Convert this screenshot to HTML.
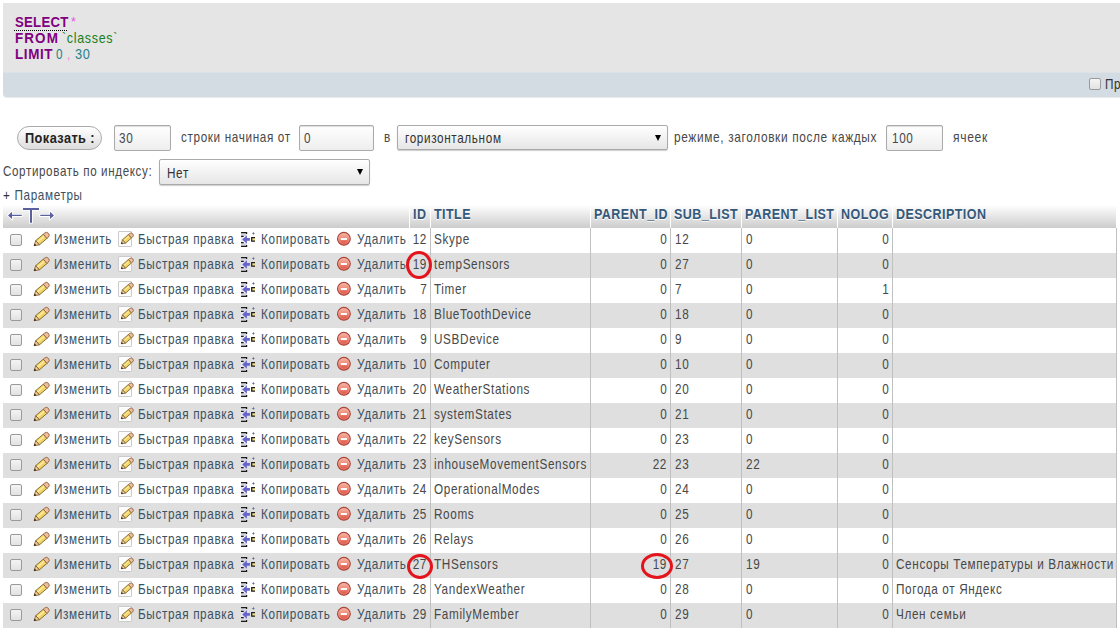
<!DOCTYPE html><html><head><meta charset="utf-8"><style>
*{margin:0;padding:0;box-sizing:border-box}
body{width:1120px;height:634px;overflow:hidden;background:#fff;font-family:"Liberation Sans",sans-serif;position:relative;color:#484848}
.a{position:absolute;white-space:pre;line-height:16px}
.t{font-size:13.9px;letter-spacing:0.75px;transform:scaleX(0.845);transform-origin:0 0}
.r{transform-origin:100% 0}
.lnk{color:#3b5262}
.kw{color:#800080;font-weight:bold;font-size:13.9px;transform-origin:0 0}
.ic{position:absolute}
.cb{position:absolute;left:10px;width:12px;height:12px;border:1px solid #9a9a9a;border-radius:2px;background:linear-gradient(#f4f4f4,#e2e2e2)}
.row{position:absolute;left:3px;width:1113px;height:25px}
.vb{position:absolute;width:1px;background:#c0c0c0}
.hb{position:absolute;width:1px;background:#fff;top:203px;height:25px}
.th{position:absolute;top:205px;font-weight:bold;color:#34587a;font-size:13.9px;line-height:16px;text-shadow:0 1px 0 #fff;letter-spacing:0.5px;transform:scaleX(0.9);transform-origin:0 0;white-space:pre}
.inp{position:absolute;border:1px solid #aaa;border-radius:2px;background:linear-gradient(#fff,#eee);box-shadow:inset 0 1px 1px #ddd}
.sel{position:absolute;border:1px solid #aaa;border-radius:2px;background:linear-gradient(#fff,#e6e6e6);box-shadow:0 1px 1px #ccc}
.circ{position:absolute;border:3px solid #e3141c;border-radius:50%}
</style></head><body>

<svg width="0" height="0" style="position:absolute"><defs>
<g id="pen1">
 <path d="M2.71,9.65 L10.32,3.17 L13.94,7.43 L6.33,13.91 Z" fill="#f2d466" stroke="#7d6024" stroke-width="0.9"/>
 <path d="M4.51,11.0 L11.36,5.17" stroke="#fff0a8" stroke-width="1.2"/>
 <path d="M10.32,3.17 L11.69,2.01 A2.8,2.8 0 0 1 15.31,6.27 L13.94,7.43 Z" fill="#eebf9c" stroke="#8a6040" stroke-width="0.9"/>
 <path d="M1.1,14.7 L2.71,9.65 L6.33,13.91 Z" fill="#f4cf9e" stroke="#7a5a2a" stroke-width="0.8"/>
 <path d="M0.9,14.9 L1.7,12.5 L3.4,14.2 Z" fill="#2a2218"/>
</g>
<linearGradient id="dg" x1="0" y1="0" x2="0" y2="1"><stop offset="0" stop-color="#f7b8a8"/><stop offset="0.45" stop-color="#f08e7c"/><stop offset="1" stop-color="#d8463a"/></linearGradient>
<g id="qe">
 <rect x="0.5" y="0.5" width="13" height="15" rx="0.5" fill="#fdfdfd" stroke="#cbcbcb"/>
 <path d="M4.43,8.77 L10.46,3.51 L13.48,6.97 L7.45,12.23 Z" fill="#f2d466" stroke="#7d6024" stroke-width="0.85"/>
 <path d="M5.99,9.79 L11.26,5.19" stroke="#fff0a8" stroke-width="1"/>
 <path d="M10.46,3.51 L11.59,2.53 A2.3,2.3 0 0 1 14.61,5.99 L13.48,6.97 Z" fill="#eebf9c" stroke="#8a6040" stroke-width="0.85"/>
 <path d="M3.3,12.8 L4.43,8.77 L7.45,12.23 Z" fill="#f4cf9e" stroke="#7a5a2a" stroke-width="0.75"/>
 <path d="M3.1,13.0 L3.7,11.1 L5.1,12.4 Z" fill="#2a2218"/>
</g>
<g id="cp">
 <rect x="1" y="2" width="5.5" height="3.2" fill="#d6d6e2"/>
 <rect x="1" y="11.9" width="5.5" height="3.2" fill="#d6d6e2"/>
 <rect x="1" y="5.2" width="2" height="6.7" fill="#e6e6ee"/>
 <path d="M1,1.6 H6.6 V3 M1,5.4 H3.7 M1,11.6 H3.7 M1,15.3 H6.6 V13.9" stroke="#1a1a1a" stroke-width="1.2" fill="none"/>
 <path d="M2.2,8.4 L6.9,4.2 V7.1 H9.9 V9.7 H6.9 V12.8 Z" fill="#6565cc"/>
 <rect x="11.6" y="6.6" width="3.4" height="3.6" fill="#eee08a"/>
 <path d="M15,6.6 H11.7 V10.2 H15" stroke="#1a1a1a" stroke-width="1.2" fill="none"/>
 <path d="M13.4,0.8 L13.9,1.9 L15,2.4 L13.9,2.9 L13.4,4 L12.9,2.9 L11.8,2.4 L12.9,1.9 Z" fill="#5a6a9a"/>
</g>
<g id="del">
 <circle cx="7.9" cy="7.8" r="6.4" fill="url(#dg)" stroke="#a8463a" stroke-width="1.1"/>
 <circle cx="7.9" cy="7.8" r="5.2" fill="none" stroke="#f6b8aa" stroke-width="0.6" opacity="0.6"/>
 <rect x="4.8" y="7.0" width="6.1" height="2" fill="#fff"/>
</g>
</defs></svg>
<div style="position:absolute;left:3px;top:3px;width:1130px;height:69px;background:#e5e5e5"></div>
<div style="position:absolute;left:3px;top:72px;width:1130px;height:25px;background:#d3dce3;border-radius:0 0 0 4px;border-top:1px solid #dde2e7;box-shadow:0 1px 0 #e8eaec"></div>
<div class="a kw" style="left:15px;top:14px;letter-spacing:0.25px;transform:scaleX(0.95)">SELECT</div>
<div style="position:absolute;left:14px;top:30px;width:53px;height:1px;border-top:1px dotted #000"></div>
<div class="a" style="left:71px;top:14px;color:#e850e8;font-size:12.5px">*</div>
<div class="a kw" style="left:15px;top:30px;letter-spacing:1.1px;transform:scaleX(0.97)">FROM</div>
<div class="a t" style="left:62px;top:30px;color:#1a801a;transform:scaleX(0.9)">`classes`</div>
<div class="a kw" style="left:15px;top:46px;letter-spacing:0.6px;transform:scaleX(0.97)">LIMIT</div>
<div class="a t" style="left:56px;top:46px;color:#2a7f88">0</div>
<div class="a" style="left:67px;top:47px;color:#f07af0;font-size:12px">,</div>
<div class="a t" style="left:75px;top:46px;color:#2a7f88;transform:scaleX(0.92)">30</div>
<div style="position:absolute;left:1089px;top:78px;width:12px;height:12px;border:1px solid #9a9a9a;border-radius:2px;background:linear-gradient(#f4f4f4,#e2e2e2)"></div>
<div class="a t" style="left:1105px;top:76px;color:#333">Пр</div>
<div style="position:absolute;left:17px;top:126px;width:85px;height:24px;border:1px solid #aaa;border-radius:12px;background:linear-gradient(#fff,#ddd)"></div>
<div class="a" style="left:25px;top:130px;font-weight:bold;font-size:13.9px;color:#222;letter-spacing:0.45px;transform:scaleX(0.92);transform-origin:0 0">Показать :</div>
<div class="inp" style="left:114px;top:125px;width:57px;height:26px"></div>
<div class="a t" style="left:119px;top:130px">30</div>
<div class="a t" style="left:181px;top:129px">строки начиная от</div>
<div class="inp" style="left:299px;top:125px;width:75px;height:26px"></div>
<div class="a t" style="left:304px;top:130px">0</div>
<div class="a t" style="left:384px;top:129px">в</div>
<div class="sel" style="left:397px;top:125px;width:271px;height:25px"></div>
<div class="a t" style="left:405px;top:130px;color:#333">горизонтальном</div>
<div style="position:absolute;left:655px;top:135px;width:0;height:0;border-left:3px solid transparent;border-right:3px solid transparent;border-top:6px solid #000"></div>
<div class="a t" style="left:674px;top:129px;transform:scaleX(0.855)">режиме, заголовки после каждых</div>
<div class="inp" style="left:886px;top:125px;width:57px;height:26px"></div>
<div class="a t" style="left:892px;top:130px">100</div>
<div class="a t" style="left:953px;top:129px;transform:scaleX(0.87)">ячеек</div>
<div class="a t" style="left:3px;top:163px;transform:scaleX(0.837)">Сортировать по индексу:</div>
<div class="sel" style="left:159px;top:159px;width:211px;height:26px"></div>
<div class="a t" style="left:167px;top:165px;color:#333">Нет</div>
<div style="position:absolute;left:357px;top:169px;width:0;height:0;border-left:3px solid transparent;border-right:3px solid transparent;border-top:6px solid #000"></div>
<div class="a t" style="left:3px;top:187px"><span style="color:#333">+ </span><span class="lnk">Параметры</span></div>
<div style="position:absolute;left:3px;top:203px;width:1113px;height:25px;background:linear-gradient(#fff,#fff 8%,#ccc)"></div>
<div class="hb" style="left:409px"></div>
<div class="hb" style="left:430px"></div>
<div class="hb" style="left:590px"></div>
<div class="hb" style="left:670px"></div>
<div class="hb" style="left:741px"></div>
<div class="hb" style="left:837px"></div>
<div class="hb" style="left:892px"></div>
<svg class="ic" style="left:6px;top:206px" width="52" height="20" viewBox="0 0 52 20"><g id="tt"><path d="M2,9.4 L6,5.7 V8.75 H15.75 V10.1 H6 V13.1 Z M17,2 H33 V4 H26 V16.75 H24 V4 H17 Z M34.25,8.75 H44 V5.7 L48,9.4 L44,13.1 V10.1 H34.25 Z" fill="#5a5f9e" stroke="#fff" stroke-width="1.6" paint-order="stroke"/></g></svg>
<div class="th" style="left:413px;top:206px">ID</div>
<div class="th" style="left:434px;top:206px">TITLE</div>
<div class="th" style="left:594px;top:206px">PARENT_ID</div>
<div class="th" style="left:674px;top:206px">SUB_LIST</div>
<div class="th" style="left:745px;top:206px">PARENT_LIST</div>
<div class="th" style="left:841px;top:206px">NOLOG</div>
<div class="th" style="left:896px;top:206px">DESCRIPTION</div>
<div class="row" style="top:228px;background:#fff"></div>
<div class="cb" style="top:234px"></div><svg class="ic" style="left:33px;top:231px" width="17" height="16" viewBox="0 0 17 16"><use href="#pen1"/></svg><svg class="ic" style="left:118px;top:231px" width="16" height="16" viewBox="0 0 16 16"><use href="#qe"/></svg><svg class="ic" style="left:240px;top:231px" width="17" height="17" viewBox="0 0 17 17"><use href="#cp"/></svg><svg class="ic" style="left:336px;top:231px" width="16" height="16" viewBox="0 0 16 16"><use href="#del"/></svg>
<div class="a t lnk" style="left:54px;top:231px">Изменить</div>
<div class="a t lnk" style="left:138px;top:231px">Быстрая правка</div>
<div class="a t lnk" style="left:261px;top:231px">Копировать</div>
<div class="a t lnk" style="left:357px;top:231px;transform:scaleX(0.85)">Удалить</div>
<div class="a t r" style="right:693px;top:231px">12</div>
<div class="a t" style="left:434px;top:231px">Skype</div>
<div class="a t r" style="right:453px;top:231px">0</div>
<div class="a t" style="left:675px;top:231px">12</div>
<div class="a t" style="left:746px;top:231px">0</div>
<div class="a t r" style="right:231px;top:231px">0</div>
<div class="row" style="top:253px;background:#dfdfdf"></div>
<div class="cb" style="top:259px"></div><svg class="ic" style="left:33px;top:256px" width="17" height="16" viewBox="0 0 17 16"><use href="#pen1"/></svg><svg class="ic" style="left:118px;top:256px" width="16" height="16" viewBox="0 0 16 16"><use href="#qe"/></svg><svg class="ic" style="left:240px;top:256px" width="17" height="17" viewBox="0 0 17 17"><use href="#cp"/></svg><svg class="ic" style="left:336px;top:256px" width="16" height="16" viewBox="0 0 16 16"><use href="#del"/></svg>
<div class="a t lnk" style="left:54px;top:256px">Изменить</div>
<div class="a t lnk" style="left:138px;top:256px">Быстрая правка</div>
<div class="a t lnk" style="left:261px;top:256px">Копировать</div>
<div class="a t lnk" style="left:357px;top:256px;transform:scaleX(0.85)">Удалить</div>
<div class="a t r" style="right:693px;top:256px">19</div>
<div class="a t" style="left:434px;top:256px">tempSensors</div>
<div class="a t r" style="right:453px;top:256px">0</div>
<div class="a t" style="left:675px;top:256px">27</div>
<div class="a t" style="left:746px;top:256px">0</div>
<div class="a t r" style="right:231px;top:256px">0</div>
<div class="row" style="top:278px;background:#fff"></div>
<div class="cb" style="top:284px"></div><svg class="ic" style="left:33px;top:281px" width="17" height="16" viewBox="0 0 17 16"><use href="#pen1"/></svg><svg class="ic" style="left:118px;top:281px" width="16" height="16" viewBox="0 0 16 16"><use href="#qe"/></svg><svg class="ic" style="left:240px;top:281px" width="17" height="17" viewBox="0 0 17 17"><use href="#cp"/></svg><svg class="ic" style="left:336px;top:281px" width="16" height="16" viewBox="0 0 16 16"><use href="#del"/></svg>
<div class="a t lnk" style="left:54px;top:281px">Изменить</div>
<div class="a t lnk" style="left:138px;top:281px">Быстрая правка</div>
<div class="a t lnk" style="left:261px;top:281px">Копировать</div>
<div class="a t lnk" style="left:357px;top:281px;transform:scaleX(0.85)">Удалить</div>
<div class="a t r" style="right:693px;top:281px">7</div>
<div class="a t" style="left:434px;top:281px">Timer</div>
<div class="a t r" style="right:453px;top:281px">0</div>
<div class="a t" style="left:675px;top:281px">7</div>
<div class="a t" style="left:746px;top:281px">0</div>
<div class="a t r" style="right:231px;top:281px">1</div>
<div class="row" style="top:303px;background:#dfdfdf"></div>
<div class="cb" style="top:309px"></div><svg class="ic" style="left:33px;top:306px" width="17" height="16" viewBox="0 0 17 16"><use href="#pen1"/></svg><svg class="ic" style="left:118px;top:306px" width="16" height="16" viewBox="0 0 16 16"><use href="#qe"/></svg><svg class="ic" style="left:240px;top:306px" width="17" height="17" viewBox="0 0 17 17"><use href="#cp"/></svg><svg class="ic" style="left:336px;top:306px" width="16" height="16" viewBox="0 0 16 16"><use href="#del"/></svg>
<div class="a t lnk" style="left:54px;top:306px">Изменить</div>
<div class="a t lnk" style="left:138px;top:306px">Быстрая правка</div>
<div class="a t lnk" style="left:261px;top:306px">Копировать</div>
<div class="a t lnk" style="left:357px;top:306px;transform:scaleX(0.85)">Удалить</div>
<div class="a t r" style="right:693px;top:306px">18</div>
<div class="a t" style="left:434px;top:306px">BlueToothDevice</div>
<div class="a t r" style="right:453px;top:306px">0</div>
<div class="a t" style="left:675px;top:306px">18</div>
<div class="a t" style="left:746px;top:306px">0</div>
<div class="a t r" style="right:231px;top:306px">0</div>
<div class="row" style="top:328px;background:#fff"></div>
<div class="cb" style="top:334px"></div><svg class="ic" style="left:33px;top:331px" width="17" height="16" viewBox="0 0 17 16"><use href="#pen1"/></svg><svg class="ic" style="left:118px;top:331px" width="16" height="16" viewBox="0 0 16 16"><use href="#qe"/></svg><svg class="ic" style="left:240px;top:331px" width="17" height="17" viewBox="0 0 17 17"><use href="#cp"/></svg><svg class="ic" style="left:336px;top:331px" width="16" height="16" viewBox="0 0 16 16"><use href="#del"/></svg>
<div class="a t lnk" style="left:54px;top:331px">Изменить</div>
<div class="a t lnk" style="left:138px;top:331px">Быстрая правка</div>
<div class="a t lnk" style="left:261px;top:331px">Копировать</div>
<div class="a t lnk" style="left:357px;top:331px;transform:scaleX(0.85)">Удалить</div>
<div class="a t r" style="right:693px;top:331px">9</div>
<div class="a t" style="left:434px;top:331px">USBDevice</div>
<div class="a t r" style="right:453px;top:331px">0</div>
<div class="a t" style="left:675px;top:331px">9</div>
<div class="a t" style="left:746px;top:331px">0</div>
<div class="a t r" style="right:231px;top:331px">0</div>
<div class="row" style="top:353px;background:#dfdfdf"></div>
<div class="cb" style="top:359px"></div><svg class="ic" style="left:33px;top:356px" width="17" height="16" viewBox="0 0 17 16"><use href="#pen1"/></svg><svg class="ic" style="left:118px;top:356px" width="16" height="16" viewBox="0 0 16 16"><use href="#qe"/></svg><svg class="ic" style="left:240px;top:356px" width="17" height="17" viewBox="0 0 17 17"><use href="#cp"/></svg><svg class="ic" style="left:336px;top:356px" width="16" height="16" viewBox="0 0 16 16"><use href="#del"/></svg>
<div class="a t lnk" style="left:54px;top:356px">Изменить</div>
<div class="a t lnk" style="left:138px;top:356px">Быстрая правка</div>
<div class="a t lnk" style="left:261px;top:356px">Копировать</div>
<div class="a t lnk" style="left:357px;top:356px;transform:scaleX(0.85)">Удалить</div>
<div class="a t r" style="right:693px;top:356px">10</div>
<div class="a t" style="left:434px;top:356px">Computer</div>
<div class="a t r" style="right:453px;top:356px">0</div>
<div class="a t" style="left:675px;top:356px">10</div>
<div class="a t" style="left:746px;top:356px">0</div>
<div class="a t r" style="right:231px;top:356px">0</div>
<div class="row" style="top:378px;background:#fff"></div>
<div class="cb" style="top:384px"></div><svg class="ic" style="left:33px;top:381px" width="17" height="16" viewBox="0 0 17 16"><use href="#pen1"/></svg><svg class="ic" style="left:118px;top:381px" width="16" height="16" viewBox="0 0 16 16"><use href="#qe"/></svg><svg class="ic" style="left:240px;top:381px" width="17" height="17" viewBox="0 0 17 17"><use href="#cp"/></svg><svg class="ic" style="left:336px;top:381px" width="16" height="16" viewBox="0 0 16 16"><use href="#del"/></svg>
<div class="a t lnk" style="left:54px;top:381px">Изменить</div>
<div class="a t lnk" style="left:138px;top:381px">Быстрая правка</div>
<div class="a t lnk" style="left:261px;top:381px">Копировать</div>
<div class="a t lnk" style="left:357px;top:381px;transform:scaleX(0.85)">Удалить</div>
<div class="a t r" style="right:693px;top:381px">20</div>
<div class="a t" style="left:434px;top:381px">WeatherStations</div>
<div class="a t r" style="right:453px;top:381px">0</div>
<div class="a t" style="left:675px;top:381px">20</div>
<div class="a t" style="left:746px;top:381px">0</div>
<div class="a t r" style="right:231px;top:381px">0</div>
<div class="row" style="top:403px;background:#dfdfdf"></div>
<div class="cb" style="top:409px"></div><svg class="ic" style="left:33px;top:406px" width="17" height="16" viewBox="0 0 17 16"><use href="#pen1"/></svg><svg class="ic" style="left:118px;top:406px" width="16" height="16" viewBox="0 0 16 16"><use href="#qe"/></svg><svg class="ic" style="left:240px;top:406px" width="17" height="17" viewBox="0 0 17 17"><use href="#cp"/></svg><svg class="ic" style="left:336px;top:406px" width="16" height="16" viewBox="0 0 16 16"><use href="#del"/></svg>
<div class="a t lnk" style="left:54px;top:406px">Изменить</div>
<div class="a t lnk" style="left:138px;top:406px">Быстрая правка</div>
<div class="a t lnk" style="left:261px;top:406px">Копировать</div>
<div class="a t lnk" style="left:357px;top:406px;transform:scaleX(0.85)">Удалить</div>
<div class="a t r" style="right:693px;top:406px">21</div>
<div class="a t" style="left:434px;top:406px">systemStates</div>
<div class="a t r" style="right:453px;top:406px">0</div>
<div class="a t" style="left:675px;top:406px">21</div>
<div class="a t" style="left:746px;top:406px">0</div>
<div class="a t r" style="right:231px;top:406px">0</div>
<div class="row" style="top:428px;background:#fff"></div>
<div class="cb" style="top:434px"></div><svg class="ic" style="left:33px;top:431px" width="17" height="16" viewBox="0 0 17 16"><use href="#pen1"/></svg><svg class="ic" style="left:118px;top:431px" width="16" height="16" viewBox="0 0 16 16"><use href="#qe"/></svg><svg class="ic" style="left:240px;top:431px" width="17" height="17" viewBox="0 0 17 17"><use href="#cp"/></svg><svg class="ic" style="left:336px;top:431px" width="16" height="16" viewBox="0 0 16 16"><use href="#del"/></svg>
<div class="a t lnk" style="left:54px;top:431px">Изменить</div>
<div class="a t lnk" style="left:138px;top:431px">Быстрая правка</div>
<div class="a t lnk" style="left:261px;top:431px">Копировать</div>
<div class="a t lnk" style="left:357px;top:431px;transform:scaleX(0.85)">Удалить</div>
<div class="a t r" style="right:693px;top:431px">22</div>
<div class="a t" style="left:434px;top:431px">keySensors</div>
<div class="a t r" style="right:453px;top:431px">0</div>
<div class="a t" style="left:675px;top:431px">23</div>
<div class="a t" style="left:746px;top:431px">0</div>
<div class="a t r" style="right:231px;top:431px">0</div>
<div class="row" style="top:453px;background:#dfdfdf"></div>
<div class="cb" style="top:459px"></div><svg class="ic" style="left:33px;top:456px" width="17" height="16" viewBox="0 0 17 16"><use href="#pen1"/></svg><svg class="ic" style="left:118px;top:456px" width="16" height="16" viewBox="0 0 16 16"><use href="#qe"/></svg><svg class="ic" style="left:240px;top:456px" width="17" height="17" viewBox="0 0 17 17"><use href="#cp"/></svg><svg class="ic" style="left:336px;top:456px" width="16" height="16" viewBox="0 0 16 16"><use href="#del"/></svg>
<div class="a t lnk" style="left:54px;top:456px">Изменить</div>
<div class="a t lnk" style="left:138px;top:456px">Быстрая правка</div>
<div class="a t lnk" style="left:261px;top:456px">Копировать</div>
<div class="a t lnk" style="left:357px;top:456px;transform:scaleX(0.85)">Удалить</div>
<div class="a t r" style="right:693px;top:456px">23</div>
<div class="a t" style="left:434px;top:456px">inhouseMovementSensors</div>
<div class="a t r" style="right:453px;top:456px">22</div>
<div class="a t" style="left:675px;top:456px">23</div>
<div class="a t" style="left:746px;top:456px">22</div>
<div class="a t r" style="right:231px;top:456px">0</div>
<div class="row" style="top:478px;background:#fff"></div>
<div class="cb" style="top:484px"></div><svg class="ic" style="left:33px;top:481px" width="17" height="16" viewBox="0 0 17 16"><use href="#pen1"/></svg><svg class="ic" style="left:118px;top:481px" width="16" height="16" viewBox="0 0 16 16"><use href="#qe"/></svg><svg class="ic" style="left:240px;top:481px" width="17" height="17" viewBox="0 0 17 17"><use href="#cp"/></svg><svg class="ic" style="left:336px;top:481px" width="16" height="16" viewBox="0 0 16 16"><use href="#del"/></svg>
<div class="a t lnk" style="left:54px;top:481px">Изменить</div>
<div class="a t lnk" style="left:138px;top:481px">Быстрая правка</div>
<div class="a t lnk" style="left:261px;top:481px">Копировать</div>
<div class="a t lnk" style="left:357px;top:481px;transform:scaleX(0.85)">Удалить</div>
<div class="a t r" style="right:693px;top:481px">24</div>
<div class="a t" style="left:434px;top:481px">OperationalModes</div>
<div class="a t r" style="right:453px;top:481px">0</div>
<div class="a t" style="left:675px;top:481px">24</div>
<div class="a t" style="left:746px;top:481px">0</div>
<div class="a t r" style="right:231px;top:481px">0</div>
<div class="row" style="top:503px;background:#dfdfdf"></div>
<div class="cb" style="top:509px"></div><svg class="ic" style="left:33px;top:506px" width="17" height="16" viewBox="0 0 17 16"><use href="#pen1"/></svg><svg class="ic" style="left:118px;top:506px" width="16" height="16" viewBox="0 0 16 16"><use href="#qe"/></svg><svg class="ic" style="left:240px;top:506px" width="17" height="17" viewBox="0 0 17 17"><use href="#cp"/></svg><svg class="ic" style="left:336px;top:506px" width="16" height="16" viewBox="0 0 16 16"><use href="#del"/></svg>
<div class="a t lnk" style="left:54px;top:506px">Изменить</div>
<div class="a t lnk" style="left:138px;top:506px">Быстрая правка</div>
<div class="a t lnk" style="left:261px;top:506px">Копировать</div>
<div class="a t lnk" style="left:357px;top:506px;transform:scaleX(0.85)">Удалить</div>
<div class="a t r" style="right:693px;top:506px">25</div>
<div class="a t" style="left:434px;top:506px">Rooms</div>
<div class="a t r" style="right:453px;top:506px">0</div>
<div class="a t" style="left:675px;top:506px">25</div>
<div class="a t" style="left:746px;top:506px">0</div>
<div class="a t r" style="right:231px;top:506px">0</div>
<div class="row" style="top:528px;background:#fff"></div>
<div class="cb" style="top:534px"></div><svg class="ic" style="left:33px;top:531px" width="17" height="16" viewBox="0 0 17 16"><use href="#pen1"/></svg><svg class="ic" style="left:118px;top:531px" width="16" height="16" viewBox="0 0 16 16"><use href="#qe"/></svg><svg class="ic" style="left:240px;top:531px" width="17" height="17" viewBox="0 0 17 17"><use href="#cp"/></svg><svg class="ic" style="left:336px;top:531px" width="16" height="16" viewBox="0 0 16 16"><use href="#del"/></svg>
<div class="a t lnk" style="left:54px;top:531px">Изменить</div>
<div class="a t lnk" style="left:138px;top:531px">Быстрая правка</div>
<div class="a t lnk" style="left:261px;top:531px">Копировать</div>
<div class="a t lnk" style="left:357px;top:531px;transform:scaleX(0.85)">Удалить</div>
<div class="a t r" style="right:693px;top:531px">26</div>
<div class="a t" style="left:434px;top:531px">Relays</div>
<div class="a t r" style="right:453px;top:531px">0</div>
<div class="a t" style="left:675px;top:531px">26</div>
<div class="a t" style="left:746px;top:531px">0</div>
<div class="a t r" style="right:231px;top:531px">0</div>
<div class="row" style="top:553px;background:#dfdfdf"></div>
<div class="cb" style="top:559px"></div><svg class="ic" style="left:33px;top:556px" width="17" height="16" viewBox="0 0 17 16"><use href="#pen1"/></svg><svg class="ic" style="left:118px;top:556px" width="16" height="16" viewBox="0 0 16 16"><use href="#qe"/></svg><svg class="ic" style="left:240px;top:556px" width="17" height="17" viewBox="0 0 17 17"><use href="#cp"/></svg><svg class="ic" style="left:336px;top:556px" width="16" height="16" viewBox="0 0 16 16"><use href="#del"/></svg>
<div class="a t lnk" style="left:54px;top:556px">Изменить</div>
<div class="a t lnk" style="left:138px;top:556px">Быстрая правка</div>
<div class="a t lnk" style="left:261px;top:556px">Копировать</div>
<div class="a t lnk" style="left:357px;top:556px;transform:scaleX(0.85)">Удалить</div>
<div class="a t r" style="right:693px;top:556px">27</div>
<div class="a t" style="left:434px;top:556px">THSensors</div>
<div class="a t r" style="right:453px;top:556px">19</div>
<div class="a t" style="left:675px;top:556px">27</div>
<div class="a t" style="left:746px;top:556px">19</div>
<div class="a t r" style="right:231px;top:556px">0</div>
<div class="a t" style="left:896px;top:556px">Сенсоры Температуры и Влажности</div>
<div class="row" style="top:578px;background:#fff"></div>
<div class="cb" style="top:584px"></div><svg class="ic" style="left:33px;top:581px" width="17" height="16" viewBox="0 0 17 16"><use href="#pen1"/></svg><svg class="ic" style="left:118px;top:581px" width="16" height="16" viewBox="0 0 16 16"><use href="#qe"/></svg><svg class="ic" style="left:240px;top:581px" width="17" height="17" viewBox="0 0 17 17"><use href="#cp"/></svg><svg class="ic" style="left:336px;top:581px" width="16" height="16" viewBox="0 0 16 16"><use href="#del"/></svg>
<div class="a t lnk" style="left:54px;top:581px">Изменить</div>
<div class="a t lnk" style="left:138px;top:581px">Быстрая правка</div>
<div class="a t lnk" style="left:261px;top:581px">Копировать</div>
<div class="a t lnk" style="left:357px;top:581px;transform:scaleX(0.85)">Удалить</div>
<div class="a t r" style="right:693px;top:581px">28</div>
<div class="a t" style="left:434px;top:581px">YandexWeather</div>
<div class="a t r" style="right:453px;top:581px">0</div>
<div class="a t" style="left:675px;top:581px">28</div>
<div class="a t" style="left:746px;top:581px">0</div>
<div class="a t r" style="right:231px;top:581px">0</div>
<div class="a t" style="left:896px;top:581px">Погода от Яндекс</div>
<div class="row" style="top:603px;background:#dfdfdf"></div>
<div class="cb" style="top:609px"></div><svg class="ic" style="left:33px;top:606px" width="17" height="16" viewBox="0 0 17 16"><use href="#pen1"/></svg><svg class="ic" style="left:118px;top:606px" width="16" height="16" viewBox="0 0 16 16"><use href="#qe"/></svg><svg class="ic" style="left:240px;top:606px" width="17" height="17" viewBox="0 0 17 17"><use href="#cp"/></svg><svg class="ic" style="left:336px;top:606px" width="16" height="16" viewBox="0 0 16 16"><use href="#del"/></svg>
<div class="a t lnk" style="left:54px;top:606px">Изменить</div>
<div class="a t lnk" style="left:138px;top:606px">Быстрая правка</div>
<div class="a t lnk" style="left:261px;top:606px">Копировать</div>
<div class="a t lnk" style="left:357px;top:606px;transform:scaleX(0.85)">Удалить</div>
<div class="a t r" style="right:693px;top:606px">29</div>
<div class="a t" style="left:434px;top:606px">FamilyMember</div>
<div class="a t r" style="right:453px;top:606px">0</div>
<div class="a t" style="left:675px;top:606px">29</div>
<div class="a t" style="left:746px;top:606px">0</div>
<div class="a t r" style="right:231px;top:606px">0</div>
<div class="a t" style="left:896px;top:606px">Член семьи</div>
<div class="vb" style="left:430px;top:228px;height:400px"></div>
<div class="vb" style="left:590px;top:228px;height:400px"></div>
<div class="vb" style="left:670px;top:228px;height:400px"></div>
<div class="vb" style="left:741px;top:228px;height:400px"></div>
<div class="vb" style="left:837px;top:228px;height:400px"></div>
<div class="vb" style="left:892px;top:228px;height:400px"></div>
<div class="vb" style="left:1116px;top:228px;height:400px"></div>
<div class="circ" style="left:406px;top:251px;width:26px;height:28px"></div>
<div class="circ" style="left:407px;top:554px;width:26px;height:25px"></div>
<div class="circ" style="left:641px;top:553px;width:32px;height:26px"></div>
</body></html>
